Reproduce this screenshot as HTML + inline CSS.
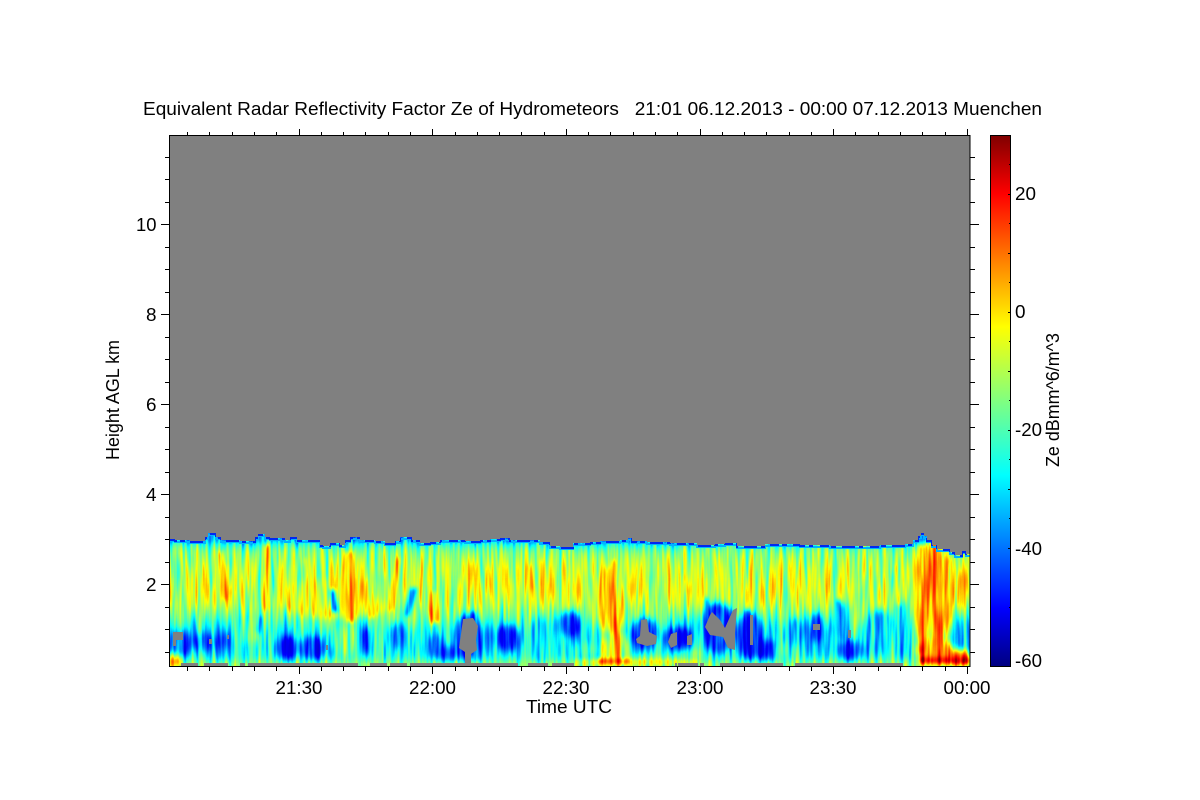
<!DOCTYPE html>
<html>
<head>
<meta charset="utf-8">
<title>Equivalent Radar Reflectivity Factor</title>
<style>
html,body{margin:0;padding:0;background:#fff;width:1200px;height:800px;overflow:hidden}
svg{display:block}
text{font-family:"Liberation Sans",sans-serif;font-size:18px;fill:#000;white-space:pre}
</style>
</head>
<body>
<svg xmlns="http://www.w3.org/2000/svg" width="1200" height="800" viewBox="0 0 1200 800">
<defs>
<linearGradient id="base" gradientUnits="userSpaceOnUse" x1="0" y1="536" x2="0" y2="666">
<stop offset=".03" stop-color="rgb(70,70,70)"/>
<stop offset=".07" stop-color="rgb(108,108,108)"/>
<stop offset=".123" stop-color="rgb(130,130,130)"/>
<stop offset=".26" stop-color="rgb(144,144,144)"/>
<stop offset=".415" stop-color="rgb(148,148,148)"/>
<stop offset=".52" stop-color="rgb(142,142,142)"/>
<stop offset=".62" stop-color="rgb(122,122,122)"/>
<stop offset=".72" stop-color="rgb(100,100,100)"/>
<stop offset=".86" stop-color="rgb(92,92,92)"/>
<stop offset=".92" stop-color="rgb(100,100,100)"/>
<stop offset=".96" stop-color="rgb(118,118,118)"/>
<stop offset="1" stop-color="rgb(135,135,135)"/>
</linearGradient>
<linearGradient id="cb" x1="0" y1="1" x2="0" y2="0">
<stop offset="0" stop-color="#000080"/>
<stop offset=".11" stop-color="#0000ff"/>
<stop offset=".36" stop-color="#00ffff"/>
<stop offset=".5" stop-color="#80ff80"/>
<stop offset=".64" stop-color="#ffff00"/>
<stop offset=".89" stop-color="#ff0000"/>
<stop offset="1" stop-color="#800000"/>
</linearGradient>
<filter id="soft" x="-50%" y="-50%" width="200%" height="200%" color-interpolation-filters="sRGB">
<feGaussianBlur stdDeviation="3 3"/>
</filter>
<filter id="jet" filterUnits="userSpaceOnUse" x="169" y="530" width="802" height="137" color-interpolation-filters="sRGB">
<feGaussianBlur in="SourceGraphic" stdDeviation="1.6 2.2" result="b"/>
<feTurbulence type="fractalNoise" baseFrequency="0.24 0.018" numOctaves="2" seed="7" result="n"/>
<feColorMatrix in="n" type="matrix" values="1 0 0 0 0 1 0 0 0 0 1 0 0 0 0 0 0 0 0 1" result="n2"/>
<feComposite in="b" in2="n2" operator="arithmetic" k1="0" k2="1" k3="0.52" k4="-0.26" result="m"/>
<feComponentTransfer in="m">
<feFuncR type="table" tableValues="0 0 0 0 .5 1 1 1 .5"/>
<feFuncG type="table" tableValues="0 0 .5 1 1 1 .5 0 0"/>
<feFuncB type="table" tableValues=".85 1 1 1 .5 0 0 0 0"/>
<feFuncA type="linear" slope="0" intercept="1"/>
</feComponentTransfer>
</filter>
<clipPath id="pc"><rect x="169" y="135" width="801" height="531"/></clipPath>
</defs>

<rect width="1200" height="800" fill="#fff"/>
<rect x="169" y="135" width="801" height="531" fill="#808080"/>

<g clip-path="url(#pc)">
<g filter="url(#jet)">
<rect x="160" y="530" width="820" height="140" fill="url(#base)"/>
<!-- broad fields -->
<g filter="url(#soft)">
  <!-- low-Z blue areas -->
  <ellipse cx="180" cy="643" rx="13" ry="13" fill="rgb(54,54,54)"/>
  <ellipse cx="204" cy="642" rx="13" ry="9" fill="rgb(58,58,58)"/>
  <ellipse cx="226" cy="640" rx="5" ry="8" fill="rgb(60,60,60)"/>
  <ellipse cx="288" cy="648" rx="12" ry="12" fill="rgb(44,44,44)"/>
  <ellipse cx="312" cy="648" rx="13" ry="12" fill="rgb(40,40,40)"/>
  <ellipse cx="330" cy="645" rx="4" ry="14" fill="rgb(52,52,52)"/>
  <ellipse cx="366" cy="641" rx="6" ry="14" fill="rgb(50,50,50)"/>
  <ellipse cx="398" cy="636" rx="8" ry="13" fill="rgb(56,56,56)"/>
  <ellipse cx="436" cy="645" rx="7" ry="11" fill="rgb(54,54,54)"/>
  <ellipse cx="448" cy="653" rx="18" ry="7" fill="rgb(46,46,46)"/>
  <ellipse cx="468" cy="636" rx="14" ry="22" fill="rgb(40,40,40)"/>
  <ellipse cx="508" cy="638" rx="14" ry="13" fill="rgb(46,46,46)"/>
  <ellipse cx="570" cy="624" rx="11" ry="13" fill="rgb(46,46,46)"/>
  <ellipse cx="645" cy="634" rx="14" ry="16" fill="rgb(42,42,42)"/>
  <ellipse cx="678" cy="639" rx="16" ry="11" fill="rgb(44,44,44)"/>
  <ellipse cx="718" cy="628" rx="18" ry="25" fill="rgb(42,42,42)"/>
  <ellipse cx="750" cy="636" rx="12" ry="24" fill="rgb(38,38,38)"/>
  <ellipse cx="768" cy="650" rx="12" ry="10" fill="rgb(42,42,42)"/>
  <ellipse cx="795" cy="632" rx="6" ry="15" fill="rgb(50,50,50)"/>
  <ellipse cx="816" cy="628" rx="7" ry="15" fill="rgb(48,48,48)"/>
  <ellipse cx="850" cy="650" rx="13" ry="10" fill="rgb(42,42,42)"/>
  <ellipse cx="842" cy="620" rx="6" ry="18" fill="rgb(70,70,70)"/>
  <ellipse cx="880" cy="632" rx="14" ry="22" fill="rgb(78,78,78)"/>
  <ellipse cx="902" cy="625" rx="8" ry="25" fill="rgb(95,95,95)"/>
  <!-- warm broad -->
  <ellipse cx="338" cy="598" rx="62" ry="20" fill="rgb(158,158,158)"/>
  <ellipse cx="610" cy="600" rx="14" ry="34" fill="rgb(172,172,172)"/>
  <ellipse cx="933" cy="600" rx="18" ry="62" fill="rgb(184,184,184)"/>
  <ellipse cx="962" cy="590" rx="7" ry="18" fill="rgb(158,158,158)"/>
  <ellipse cx="962" cy="630" rx="7" ry="12" fill="rgb(100,100,100)"/>
  <ellipse cx="615" cy="650" rx="14" ry="18" fill="rgb(150,150,150)"/>
  <ellipse cx="935" cy="650" rx="18" ry="12" fill="rgb(200,200,200)"/>
  <ellipse cx="959" cy="657" rx="11" ry="7" fill="rgb(222,222,222)"/>
  <ellipse cx="584" cy="650" rx="14" ry="8" fill="rgb(118,118,118)"/>
  <ellipse cx="650" cy="660" rx="45" ry="3" fill="rgb(145,145,145)"/>
  <ellipse cx="250" cy="628" rx="12" ry="14" fill="rgb(112,112,112)"/>
  <ellipse cx="345" cy="640" rx="12" ry="18" fill="rgb(122,122,122)"/>
  <ellipse cx="542" cy="640" rx="14" ry="22" fill="rgb(98,98,98)"/>
  <ellipse cx="690" cy="655" rx="14" ry="6" fill="rgb(125,125,125)"/>
  <ellipse cx="782" cy="652" rx="6" ry="10" fill="rgb(122,122,122)"/>
  <ellipse cx="172" cy="660" rx="10" ry="6" fill="rgb(170,170,170)"/>
</g>
<!-- narrow streaks: warm -->
<g fill="rgb(172,172,172)">
  <path d="M218 552l4 0 6 48 -5 0z"/>
  <path d="M226 565l3 0 3 30 -3 0z" fill="rgb(166,166,166)"/>
  <path d="M264 545l5 0 2 45 -2 20 -5 0 -1 -30z"/>
  <path d="M303 558l4 0 5 50 -5 0z"/>
  <path d="M345 552l8 0 4 50 -3 20 -8 0 2 -30z" fill="rgb(180,180,180)"/>
  <path d="M396 558l5 0 -4 35 -4 18 -4 0 2 -25z" fill="rgb(176,176,176)"/>
  <path d="M370 590l8 10 -3 18 -6 0z" fill="rgb(168,168,168)"/>
  <path d="M430 592l7 0 2 30 -8 2 -3 -14z" fill="rgb(182,182,182)"/>
  <path d="M527 565l4 0 3 25 -4 0z" fill="rgb(164,164,164)"/>
  <path d="M538 560l4 0 0 26 -3 0z" fill="rgb(164,164,164)"/>
  <path d="M612 560l4 0 3 40 0 58 -5 0 -1 -50z" fill="rgb(188,188,188)"/>
  <path d="M683 575l4 0 2 18 -4 0z" fill="rgb(164,164,164)"/>
  <path d="M894 565l3 0 4 40 -3 0z" fill="rgb(172,172,172)"/>
  <path d="M918 545l8 0 4 50 -6 0z" fill="rgb(182,182,182)"/>
  <path d="M933 560l5 0 5 90 -7 0z" fill="rgb(190,190,190)"/>
  <path d="M946 558l6 0 -1 50 -6 0z" fill="rgb(182,182,182)"/>
</g>
<!-- narrow streaks: cold -->
<g fill="rgb(55,55,55)">
  <path d="M330 590l5 0 3 22 -6 0z" fill="rgb(44,44,44)"/>
  <path d="M410 588l8 0 -8 28 -6 0z" fill="rgb(70,70,70)"/>
  <path d="M256 630l4 -14 2 0 -2 20z" fill="rgb(55,55,55)"/>
  <path d="M470 612l6 0 3 46 -4 6z"/>
  <path d="M705 598l3 0 2 22 -4 0z"/>
  <path d="M745 610l5 0 -3 40 -5 0z" fill="rgb(40,40,40)"/>
  <path d="M836 600l4 0 6 40 -5 0z"/>
</g>
<!-- bottom rows -->
<rect x="169" y="660" width="12" height="4" fill="rgb(185,185,185)"/>
<rect x="597" y="659" width="32" height="5" fill="rgb(215,215,215)"/>
<rect x="920" y="657" width="50" height="7" fill="rgb(235,235,235)"/>
<rect x="950" y="660" width="20" height="4" fill="rgb(248,248,248)"/>
<rect x="575" y="660" width="22" height="4" fill="rgb(155,155,155)"/>
<rect x="629" y="660" width="70" height="4" fill="rgb(165,165,165)"/>
</g>

<!-- gate strip at bottom, mostly missing -->
<g fill="#808080" shape-rendering="crispEdges">
  <rect x="181" y="663" width="17" height="3"/>
  <rect x="204" y="663" width="24" height="3"/>
  <rect x="240" y="663" width="5" height="3"/>
  <rect x="248" y="663" width="110" height="3"/>
  <rect x="370" y="663" width="17" height="3"/>
  <rect x="390" y="663" width="17" height="3"/>
  <rect x="410" y="663" width="105" height="3"/>
  <rect x="510" y="663" width="8" height="3"/>
  <rect x="528" y="663" width="20" height="3"/>
  <rect x="552" y="663" width="22" height="3"/>
  <rect x="675" y="663" width="2" height="3"/>
  <rect x="678" y="663" width="20" height="3"/>
  <rect x="700" y="663" width="4" height="3"/>
  <rect x="720" y="663" width="63" height="3"/>
  <rect x="795" y="663" width="108" height="3"/>
</g>

<!-- echo-top fringe -->
<path fill="none" stroke="#00b4ff" stroke-width="2" shape-rendering="crispEdges" d="M169 541H175V542H190V543H205V539H208V535H216V539H221V542H240V543H255V539H258V536H265V539H270V540H285V542H290V539H297V542H320V547H323V548H330V545H340V547H345V542H350V539H360V542H375V543H385V545H395V543H400V539H412V542H420V545H430V544H440V542H465V543H480V542H490V541H500V540H510V542H540V544H550V548H560V549H573V545H590V544H600V543H620V542H628V540H632V543H647V544H670V545H697V547H715V546H725V545H737V548H765V546H800V547H830V548H880V547H905V546H913V542H918V538H921V535H924V538H927V542H932V547H937V551H950V554H955V557H962V553H966V556H970"/>
<path fill="none" stroke="#0028f0" stroke-width="2" stroke-dasharray="9 3 5 6 13 4 4 7" shape-rendering="crispEdges" d="M169 540H175V541H190V542H205V538H208V534H216V538H221V541H240V542H255V538H258V535H265V538H270V539H285V541H290V538H297V541H320V546H323V547H330V544H340V546H345V541H350V538H360V541H375V542H385V544H395V542H400V538H412V541H420V544H430V543H440V541H465V542H480V541H490V540H500V539H510V541H540V543H550V547H560V548H573V544H590V543H600V542H620V541H628V539H632V542H647V543H670V544H697V546H715V545H725V544H737V547H765V545H800V546H830V547H880V546H905V545H913V541H918V537H921V534H924V537H927V541H932V546H937V550H950V553H955V556H962V552H966V555H970"/>
<!-- gray above echo top -->
<path fill="#808080" shape-rendering="crispEdges" d="M169 135V539H175V540H190V541H205V537H208V533H216V537H221V540H240V541H255V537H258V534H265V537H270V538H285V540H290V537H297V540H320V545H323V546H330V543H340V545H345V540H350V537H360V540H375V541H385V543H395V541H400V537H412V540H420V543H430V542H440V540H465V541H480V540H490V539H500V538H510V540H540V542H550V546H560V547H573V543H590V542H600V541H620V540H628V538H632V541H647V542H670V543H697V545H715V544H725V543H737V546H765V544H800V545H830V546H880V545H905V544H913V540H918V536H921V533H924V536H927V540H932V545H937V549H950V552H955V555H962V551H966V554H970V135Z"/>

<!-- missing data holes -->
<g fill="#808080">
  <path d="M463 619L473 618L478 626L476 640L477 650L471 654L471 664L465 664L465 652L459 648L461 634Z"/>
  <path d="M641 620L647 619L649 632L657 636L656 644L647 646L637 643L636 639L640 636Z"/>
  <path d="M671 634L677 632L677 645L671 648L668 642Z"/>
  <path d="M687 636L692 634L692 645L687 645Z"/>
  <path d="M712 612L720 620L725 628L733 610L737 608L735 633L735 650L728 648L723 637L710 635L705 627L710 615Z"/>
  <path d="M750 615L753 615L753 645L750 645Z"/>
  <path d="M173 632H183V640H176V646H173Z"/>
  <path d="M209 639H212V644H209Z"/>
  <path d="M227 635H229V639H227Z"/>
  <path d="M326 645H328V650H326Z"/>
  <path d="M813 624H820V630H813Z"/>
  <path d="M848 630H851V638H848Z"/>
</g>
</g>

<!-- frame -->
<rect x="169.5" y="135.5" width="800.5" height="531" fill="none" stroke="#000" stroke-width="1" shape-rendering="crispEdges"/>

<!-- ticks -->
<path fill="none" stroke="#000" stroke-width="1" shape-rendering="crispEdges" d="
M187.5 667v4M209.5 667v4M232.5 667v4M254.5 667v4M276.5 667v4M299.5 667v7M321.5 667v4M343.5 667v4M365.5 667v4M388.5 667v4M410.5 667v4M432.5 667v7M455.5 667v4M477.5 667v4M499.5 667v4M521.5 667v4M544.5 667v4M566.5 667v7M588.5 667v4M610.5 667v4M633.5 667v4M655.5 667v4M677.5 667v4M700.5 667v7M722.5 667v4M744.5 667v4M766.5 667v4M789.5 667v4M811.5 667v4M833.5 667v7M855.5 667v4M878.5 667v4M900.5 667v4M922.5 667v4M945.5 667v4M967.5 667v7
M187.5 135v-3M209.5 135v-3M232.5 135v-3M254.5 135v-3M276.5 135v-3M299.5 135v-6M321.5 135v-3M343.5 135v-3M365.5 135v-3M388.5 135v-3M410.5 135v-3M432.5 135v-6M455.5 135v-3M477.5 135v-3M499.5 135v-3M521.5 135v-3M544.5 135v-3M566.5 135v-6M588.5 135v-3M610.5 135v-3M633.5 135v-3M655.5 135v-3M677.5 135v-3M700.5 135v-6M722.5 135v-3M744.5 135v-3M766.5 135v-3M789.5 135v-3M811.5 135v-3M833.5 135v-6M855.5 135v-3M878.5 135v-3M900.5 135v-3M922.5 135v-3M945.5 135v-3M967.5 135v-6
M165 157.5h4M165 179.5h4M165 202.5h4M161 224.5h8M165 247.5h4M165 269.5h4M165 292.5h4M161 314.5h8M165 337.5h4M165 359.5h4M165 382.5h4M161 404.5h8M165 427.5h4M165 449.5h4M165 472.5h4M161 494.5h8M165 517.5h4M165 539.5h4M165 562.5h4M161 584.5h8M165 607.5h4M165 629.5h4M165 652.5h4
M970 157.5h5M970 179.5h5M970 202.5h5M970 224.5h9M970 247.5h5M970 269.5h5M970 292.5h5M970 314.5h9M970 337.5h5M970 359.5h5M970 382.5h5M970 404.5h9M970 427.5h5M970 449.5h5M970 472.5h5M970 494.5h9M970 517.5h5M970 539.5h5M970 562.5h5M970 584.5h9M970 607.5h5M970 629.5h5M970 652.5h5"/>

<!-- colour bar -->
<rect x="990.5" y="135.5" width="20" height="531" fill="url(#cb)" stroke="#000" stroke-width="1" shape-rendering="crispEdges"/>
<path fill="none" stroke="#000" stroke-width="1" shape-rendering="crispEdges" d="M1009 164.5h2M1008 194.5h3M1009 223.5h2M1008 253.5h3M1009 282.5h2M1008 312.5h3M1009 341.5h2M1008 371.5h3M1009 400.5h2M1008 430.5h3M1009 459.5h2M1008 489.5h3M1009 518.5h2M1008 548.5h3M1009 607.5h2"/>

<!-- title -->
<text x="143" y="115" textLength="899" lengthAdjust="spacingAndGlyphs">Equivalent Radar Reflectivity Factor Ze of Hydrometeors   21:01 06.12.2013 - 00:00 07.12.2013 Muenchen</text>

<!-- y labels -->
<text x="136" y="231" textLength="20.5" lengthAdjust="spacingAndGlyphs">10</text>
<text x="146" y="321" textLength="10.5" lengthAdjust="spacingAndGlyphs">8</text>
<text x="146" y="411" textLength="10.5" lengthAdjust="spacingAndGlyphs">6</text>
<text x="146" y="501" textLength="10.5" lengthAdjust="spacingAndGlyphs">4</text>
<text x="146" y="591" textLength="10.5" lengthAdjust="spacingAndGlyphs">2</text>

<!-- x labels -->
<text x="275.5" y="694" textLength="47" lengthAdjust="spacingAndGlyphs">21:30</text>
<text x="409" y="694" textLength="47" lengthAdjust="spacingAndGlyphs">22:00</text>
<text x="542.5" y="694" textLength="47" lengthAdjust="spacingAndGlyphs">22:30</text>
<text x="676.5" y="694" textLength="47" lengthAdjust="spacingAndGlyphs">23:00</text>
<text x="809.5" y="694" textLength="47" lengthAdjust="spacingAndGlyphs">23:30</text>
<text x="943.5" y="694" textLength="47" lengthAdjust="spacingAndGlyphs">00:00</text>
<text x="526" y="713" textLength="86" lengthAdjust="spacingAndGlyphs">Time UTC</text>

<!-- axis titles -->
<text transform="translate(119,460) rotate(-90)" x="0" y="0" textLength="120" lengthAdjust="spacingAndGlyphs">Height AGL km</text>
<text transform="translate(1059,467) rotate(-90)" x="0" y="0" textLength="134" lengthAdjust="spacingAndGlyphs">Ze dBmm^6/m^3</text>

<!-- colour bar labels -->
<text x="1015" y="200" textLength="21" lengthAdjust="spacingAndGlyphs">20</text>
<text x="1015" y="318" textLength="10.5" lengthAdjust="spacingAndGlyphs">0</text>
<text x="1015" y="436" textLength="27" lengthAdjust="spacingAndGlyphs">-20</text>
<text x="1015" y="555" textLength="27" lengthAdjust="spacingAndGlyphs">-40</text>
<text x="1015" y="667" textLength="27" lengthAdjust="spacingAndGlyphs">-60</text>
</svg>
</body>
</html>
